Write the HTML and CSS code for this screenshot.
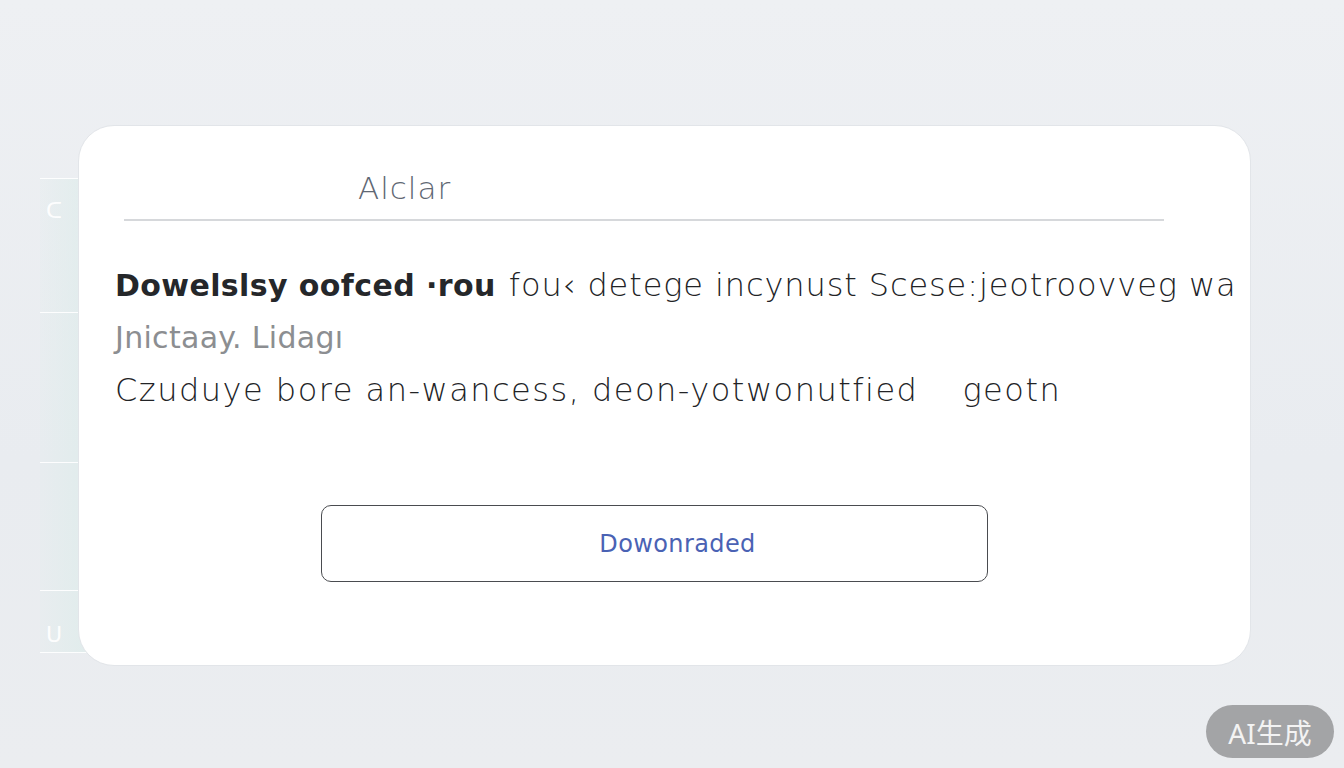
FILE: index.html
```html
<!DOCTYPE html>
<html lang="en">
<head>
<meta charset="utf-8">
<title>Alclar</title>
<link rel="stylesheet" href="styles.css">
</head>
<body>
<div class="backdrop">
  <div class="ghost-panel">
    <span class="ghost-line l1"></span>
    <span class="ghost-line l2"></span>
    <span class="ghost-line l3"></span>
    <span class="ghost-line l4"></span>
    <span class="ghost-line l5"></span>
    <span class="ghost-mark m1">ᑕ</span>
    <span class="ghost-mark m2">ᑌ</span>
  </div>
</div>
<main class="card">
  <header class="card-head">
    <h1 class="title">Alclar</h1>
  </header>
  <section class="body">
    <p class="line lead"><b class="strong">Dowelslsy oofced ·rou</b> <span class="tail">fou‹ detege incynust Scese:jeotroovveg wa</span></p>
    <p class="line sub">Jnictaay. Lidagı</p>
    <p class="line wide">Czuduye bore an-wancess, deon-yotwonutfied<span class="gap"></span>geotn</p>
  </section>
  <div class="actions">
    <button class="btn">Dowonraded</button>
  </div>
</main>
<div class="badge">AI生成</div>
</body>
</html>
```
FILE: styles.css
```css
html, body {
  margin: 0;
  padding: 0;
}
body {
  width: 1344px;
  height: 768px;
  overflow: hidden;
  background: linear-gradient(180deg, #eef0f3 0%, #e9ecf0 60%, #ebedf0 100%);
  font-family: "DejaVu Sans", "Noto Sans", sans-serif;
  position: relative;
}
.backdrop {
  position: absolute;
  left: 0;
  top: 0;
  width: 1344px;
  height: 768px;
}
.ghost-panel {
  position: absolute;
  left: 40px;
  top: 178px;
  width: 60px;
  height: 475px;
  background: linear-gradient(90deg, rgba(225,236,236,0.2), rgba(220,236,234,0.8));
}
.ghost-line {
  position: absolute;
  left: 0;
  width: 60px;
  height: 1px;
  background: rgba(255,255,255,0.9);
}
.l1 { top: 0; }
.l2 { top: 134px; }
.l3 { top: 284px; }
.l4 { top: 412px; }
.l5 { top: 474px; }
.ghost-mark {
  position: absolute;
  left: 6px;
  font-size: 22px;
  color: rgba(255,255,255,0.95);
  line-height: 1;
}
.m1 { top: 22px; }
.m2 { top: 446px; }
.card {
  position: relative;
  margin: 125px 0 0 78px;
  width: 1173px;
  height: 541px;
  box-sizing: border-box;
  background: #ffffff;
  border: 1px solid #e2e5e9;
  border-radius: 36px;
  overflow: hidden;
  display: flex;
  flex-direction: column;
}
.card-head {
  margin: 0 86px 0 45px;
  height: 95px;
  border-bottom: 2px solid #d6d8db;
  box-sizing: border-box;
  display: flex;
  align-items: flex-end;
}
.title {
  margin: 0 0 13px 234px;
  font-size: 31px;
  font-weight: 200;
  letter-spacing: 1px;
  color: #5f6874;
}
.body {
  padding: 38px 0 0 36px;
  white-space: nowrap;
}
.line {
  margin: 0;
  font-size: 32px;
  line-height: 53px;
  letter-spacing: 0.9px;
  color: #222326;
  font-weight: 200;
}
.wide {
  letter-spacing: 1.5px;
}
.strong {
  font-size: 30px;
  font-weight: 700;
  color: #25272a;
  letter-spacing: 0.4px;
  margin-right: 2px;
}
.sub {
  font-size: 30px;
  color: #8c8e91;
  font-weight: 400;
  letter-spacing: 0.3px;
  line-height: 52px;
}
.gap {
  display: inline-block;
  width: 44px;
}
.actions {
  padding: 88px 0 0 242px;
}
.btn {
  width: 667px;
  height: 77px;
  padding-left: 52px;
  background: #ffffff;
  border: 1px solid #4a4c50;
  border-radius: 10px;
  font-family: "DejaVu Sans", sans-serif;
  font-weight: 400;
  font-size: 24px;
  letter-spacing: 0.4px;
  color: #4a62b4;
  cursor: pointer;
}
.badge {
  position: absolute;
  left: 1206px;
  top: 705px;
  width: 128px;
  height: 53px;
  border-radius: 27px;
  background: #a3a4a6;
  color: #f3f3f3;
  font-family: "Noto Sans", "Noto Sans CJK SC", sans-serif;
  font-size: 28px;
  display: flex;
  align-items: center;
  justify-content: center;
}
```
